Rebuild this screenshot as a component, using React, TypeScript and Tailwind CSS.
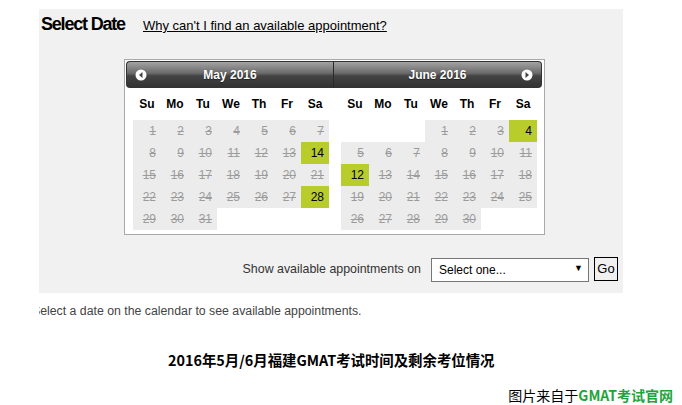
import React from "react";

type Day = { n: number; open?: boolean } | null;

const may: Day[][] = [
  [1, 2, 3, 4, 5, 6, 7].map((n) => ({ n })),
  [8, 9, 10, 11, 12, 13].map((n) => ({ n } as Day)).concat([{ n: 14, open: true }]),
  [15, 16, 17, 18, 19, 20, 21].map((n) => ({ n })),
  [22, 23, 24, 25, 26, 27].map((n) => ({ n } as Day)).concat([{ n: 28, open: true }]),
  [{ n: 29 }, { n: 30 }, { n: 31 }, null, null, null, null],
];

const june: Day[][] = [
  [null, null, null, { n: 1 }, { n: 2 }, { n: 3 }, { n: 4, open: true }],
  [5, 6, 7, 8, 9, 10, 11].map((n) => ({ n })),
  [{ n: 12, open: true } as Day].concat([13, 14, 15, 16, 17, 18].map((n) => ({ n }))),
  [19, 20, 21, 22, 23, 24, 25].map((n) => ({ n })),
  [{ n: 26 }, { n: 27 }, { n: 28 }, { n: 29 }, { n: 30 }, null, null],
];

const dayNames = ["Su", "Mo", "Tu", "We", "Th", "Fr", "Sa"];

const Arrow = ({ dir }: { dir: "left" | "right" }) => (
  <svg width="12" height="12" viewBox="0 0 12 12">
    <circle cx="6" cy="6" r="5.5" fill="#fff" />
    {dir === "left" ? (
      <polygon points="7.5,3 4,6 7.5,9" fill="#444" />
    ) : (
      <polygon points="4.5,3 8,6 4.5,9" fill="#444" />
    )}
  </svg>
);

const Month = ({ weeks }: { weeks: Day[][] }) => (
  <div className="pl-[7px]">
    <div className="grid grid-cols-7 w-[196px] h-[32px] items-center text-[12px] font-bold text-black">
      {dayNames.map((d) => (
        <div key={d} className="text-center">
          {d}
        </div>
      ))}
    </div>
    <div className="w-[196px]">
      {weeks.map((week, i) => (
        <div key={i} className="grid grid-cols-7 h-[22px]">
          {week.map((day, j) =>
            day ? (
              <div
                key={j}
                className={`flex items-center justify-end pr-[5px] text-[12px] ${
                  day.open ? "bg-[#b8cd2c] text-black" : "bg-[#ececec] text-[#9c9c9c] line-through"
                }`}
              >
                {day.n}
              </div>
            ) : (
              <div key={j} />
            )
          )}
        </div>
      ))}
    </div>
  </div>
);

const App = () => {
  return (
    <div className="w-[682px] h-[405px] bg-white overflow-hidden font-['Liberation_Sans',Arial,sans-serif]">
      <div className="ml-[39px] pt-[9px] w-[584px]">
        <div className="h-[284px] bg-[#f1f1f1] pt-[2px]">
          <div className="flex items-baseline h-[24px] pl-[2px]">
            <span className="w-[102px] text-[18px] font-bold tracking-[-1.2px] text-black">Select Date</span>
            <a href="#" className="text-[13px] text-black underline">
              Why can't I find an available appointment?
            </a>
          </div>

          <div className="ml-[85px] mt-[24px] w-[421px] h-[176px] border border-[#a9a9a9] bg-white p-[1px]">
            <div className="flex h-[27px] text-white text-[12px] font-bold [text-shadow:0_1px_1px_#222]">
              <div className="w-[207px] flex items-center rounded-l-[4px] bg-[linear-gradient(#a3a3a3,#6a6a6a_45%,#444_55%,#333)] border border-[#333] border-r-0 pl-[8px]">
                <Arrow dir="left" />
                <span className="flex-1 text-center pr-[20px]">May 2016</span>
              </div>
              <div className="w-[1px] bg-[#2a2a2a]" />
              <div className="w-[208px] flex items-center rounded-r-[4px] bg-[linear-gradient(#a3a3a3,#6a6a6a_45%,#444_55%,#333)] border border-[#333] border-l-0 pr-[8px]">
                <span className="flex-1 text-center pl-[20px]">June 2016</span>
                <Arrow dir="right" />
              </div>
            </div>
            <div className="flex">
              <div className="w-[208px]">
                <Month weeks={may} />
              </div>
              <div className="w-[208px]">
                <Month weeks={june} />
              </div>
            </div>
          </div>

          <div className="mt-[22px] h-[24px] flex items-center justify-end pr-[5px]">
            <span className="text-[12.4px] text-[#333] mr-[10px]">Show available appointments on</span>
            <div className="relative w-[158px] h-[24px]">
              <select className="appearance-none w-full h-full border border-[#767676] bg-white pl-[7px] text-[12px] text-black outline-none">
                <option>Select one...</option>
              </select>
              <span className="absolute right-[6px] top-[5px] text-[9px] text-black pointer-events-none">▼</span>
            </div>
            <button className="ml-[5px] w-[24px] h-[24px] border border-black bg-[#f0f0f0] text-[13px] text-black">
              Go
            </button>
          </div>
        </div>

        <div className="mt-[11px] h-[14px] overflow-hidden">
          <p className="-ml-[7px] text-[12.3px] leading-[14px] text-[#444] whitespace-nowrap">
            Select a date on the calendar to see available appointments.
          </p>
        </div>
      </div>

      <div className="mt-[32px] h-[20px] pl-[168px] flex items-center text-[14.4px] font-bold text-black font-['Noto_Sans_CJK_SC',sans-serif]">
        2016年5月/6月福建GMAT考试时间及剩余考位情况
      </div>

      <div className="mt-[15px] h-[20px] pr-[9px] flex items-center justify-end text-[14px] font-['Noto_Sans_CJK_SC',sans-serif]">
        <span className="text-black">图片来自于</span>
        <span className="font-bold text-[#1ea53a]">GMAT考试官网</span>
      </div>
    </div>
  );
};

export default App;
